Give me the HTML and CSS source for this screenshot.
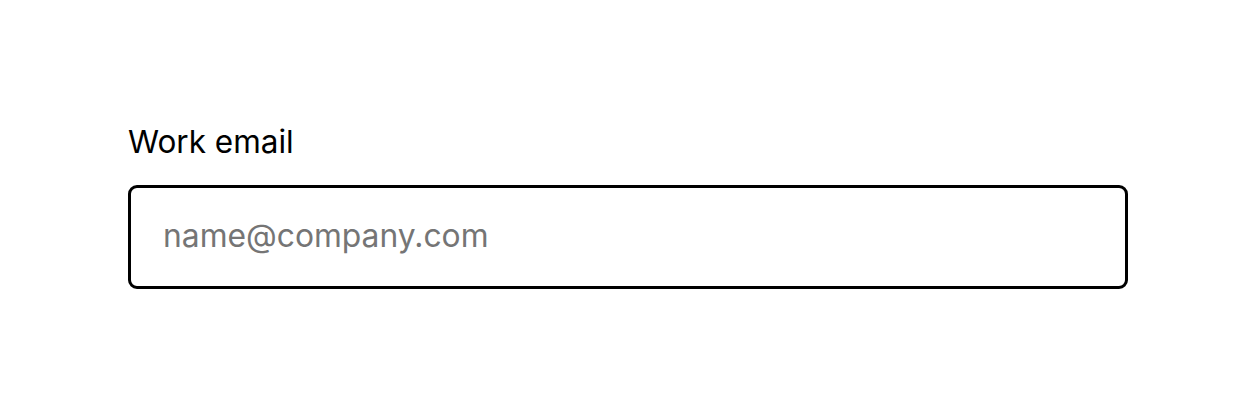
FILE: index.html
```html
<!DOCTYPE html>
<html>
<head>
<meta charset="utf-8">
<link rel="stylesheet" href="styles.css">
</head>
<body>
<div class="page">
  <div class="field">
    <label class="label" for="email">Work email</label>
    <input class="input" id="email" type="email" placeholder="name@company.com">
  </div>
</div>
</body>
</html>
```
FILE: styles.css
```css
html, body {
  margin: 0;
  padding: 0;
  background: #ffffff;
}
.page {
  width: 1256px;
  height: 417px;
  box-sizing: border-box;
  padding: 123px 128px 0 128px;
}
.field {
  display: flex;
  flex-direction: column;
  gap: 24px;
  width: 1000px;
}
.label {
  font-family: Inter, "Liberation Sans", sans-serif;
  font-size: 31.5px;
  line-height: 38px;
  color: #000000;
}
.input {
  box-sizing: border-box;
  width: 1000px;
  height: 104px;
  border: 3px solid #000000;
  border-radius: 9px;
  padding: 0 32px 4px 32px;
  font-family: Inter, "Liberation Sans", sans-serif;
  font-size: 31.8px;
  color: #000;
  background: #fff;
  outline: none;
}
.input::placeholder {
  color: #757575;
}
```
